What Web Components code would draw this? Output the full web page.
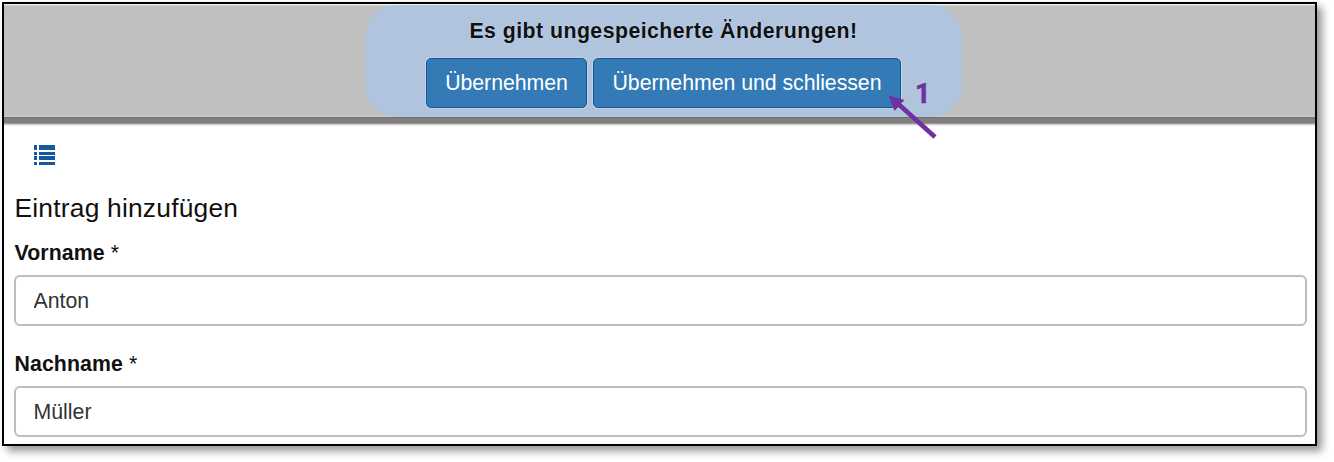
<!DOCTYPE html>
<html lang="de">
<head>
<meta charset="utf-8">
<title>Eintrag hinzufügen</title>
<style>
html, body { margin: 0; height: 462px; overflow: hidden; background: #fff; }
body { font-family: "Liberation Sans", Arial, sans-serif; font-size: 21.3px; color: #111; }
</style>
</head>
<body>
<entry-window>
  <save-bar slot="bar" message="Es gibt ungespeicherte Änderungen!">
    <action-button style="width:161px">Übernehmen</action-button>
    <action-button style="width:308px">Übernehmen und schliessen</action-button>
    <step-marker slot="marker">1</step-marker>
  </save-bar>
  <list-icon></list-icon>
  <form-title>Eintrag hinzufügen</form-title>
  <text-field label="Vorname" value="Anton"></text-field>
  <text-field label="Nachname" value="Müller"></text-field>
</entry-window>
<script>
class Base extends HTMLElement {
  connectedCallback() {
    if (!this.shadowRoot) this.attachShadow({ mode: "open" }).innerHTML = this.render();
  }
}
customElements.define("entry-window", class extends Base {
  render() { return `<style>
    :host { display: block; box-sizing: border-box; width: 1315px; height: 444px; margin: 2px 0 0 2px;
      border: 2px solid #000; background: #fff; box-shadow: 5px 5px 8px rgba(0,0,0,.42); }
    .content { display: flex; flex-direction: column; padding: 20px 8px 0 10px; }
    </style><slot name="bar"></slot><div class="content"><slot></slot></div>`; }
});
customElements.define("save-bar", class extends Base {
  render() { return `<style>
    :host { display: flex; justify-content: center; position: relative; box-sizing: border-box; height: 122px;
      padding: 1px 0 0 8px; background: linear-gradient(#f0f0f0 0 1px, #cfcfcf 1px 2px, #c0c0c0 2px 112px, #cdcdcd 112px 113px, #6f6f6f 113px 114px, #7f7f7f 114px 119px, #999 119px 120px, #d0d0d0 120px 121px, #f0f0f0 121px 122px); }
    .panel { box-sizing: border-box; width: 597px; height: 112px; padding-top: 14px; border-radius: 32px;
      background: #b0c4de; display: flex; flex-direction: column; align-items: center; }
    .msg { font-weight: bold; line-height: 24px; letter-spacing: .45px; white-space: nowrap; text-shadow: 0 0 2px #cfe0f6; }
    .actions { display: flex; gap: 6px; margin-top: 15px; }
    </style><div class="panel"><div class="msg">${this.getAttribute("message")}</div>
    <div class="actions"><slot></slot></div></div><slot name="marker"></slot>`; }
});
customElements.define("action-button", class extends Base {
  render() { return `<style>
    :host { display: block; }
    button { display: block; box-sizing: border-box; width: 100%; height: 50px; padding: 1px 0 0; margin: 0; border: 1px solid #1b5689;
      border-radius: 5px; background: #337ab7; color: #fff; font: inherit; letter-spacing: -.04px; white-space: nowrap;
      box-shadow: 0 0 0 1px #bdd3ee; }
    </style><button type="button"><slot></slot></button>`; }
});
customElements.define("step-marker", class extends Base {
  render() { return `<style>
    :host { position: absolute; left: 882px; top: 76px; width: 55px; height: 62px; color: #7030a0; }
    svg { position: absolute; inset: 0; }
    span { position: absolute; left: 29px; top: -1px; font: bold 27px/30px Roboto, sans-serif; -webkit-text-stroke: .5px #7030a0; }
    </style><svg width="55" height="62" viewBox="0 0 55 62"><path d="M9 21 49 57" stroke="currentColor" stroke-width="4.6" fill="none"/>
    <path d="M2.5 15.5 18.5 20 8.5 31Z" fill="currentColor"/></svg><span><slot></slot></span>`; }
});
customElements.define("list-icon", class extends Base {
  render() { return `<style>
    :host { display: block; height: 22px; padding-left: 19px; margin-top: -1px; }
    svg { display: block; }
    </style><svg width="23" height="22" viewBox="0 0 23 22" fill="#15599c" shape-rendering="crispEdges">
    <path d="M1 0h3v5h-3zM6 0h16v5h-16zM1 7h3v3h-3zM6 7h16v3h-16zM1 11h3v4h-3zM6 11h16v4h-16zM1 17h3v3h-3zM6 17h16v3h-16z"/></svg>`; }
});
customElements.define("form-title", class extends Base {
  render() { return `<style>
    :host { display: block; margin-top: 26px; padding-left: .5px; font-size: 26.4px; line-height: 30px; letter-spacing: .2px; }
    </style><slot></slot>`; }
});
customElements.define("text-field", class extends Base {
  render() { return `<style>
    :host { display: block; height: 111px; padding-top: 18px; box-sizing: border-box; }
    label { display: block; padding-left: .5px; line-height: 24px; letter-spacing: .1px; font-weight: bold; }
    span { font-weight: normal; }
    input { display: block; box-sizing: border-box; width: 100%; height: 51px; margin: 10px 0 0; padding: 2px 17px 0 17.5px;
      border: 2px solid #bebebe; border-radius: 6px; background: #fff; color: #333; font: inherit; outline: none; }
    </style><label>${this.getAttribute("label")} <span>*</span></label><input value="${this.getAttribute("value")}">`; }
});
</script>
</body>
</html>
